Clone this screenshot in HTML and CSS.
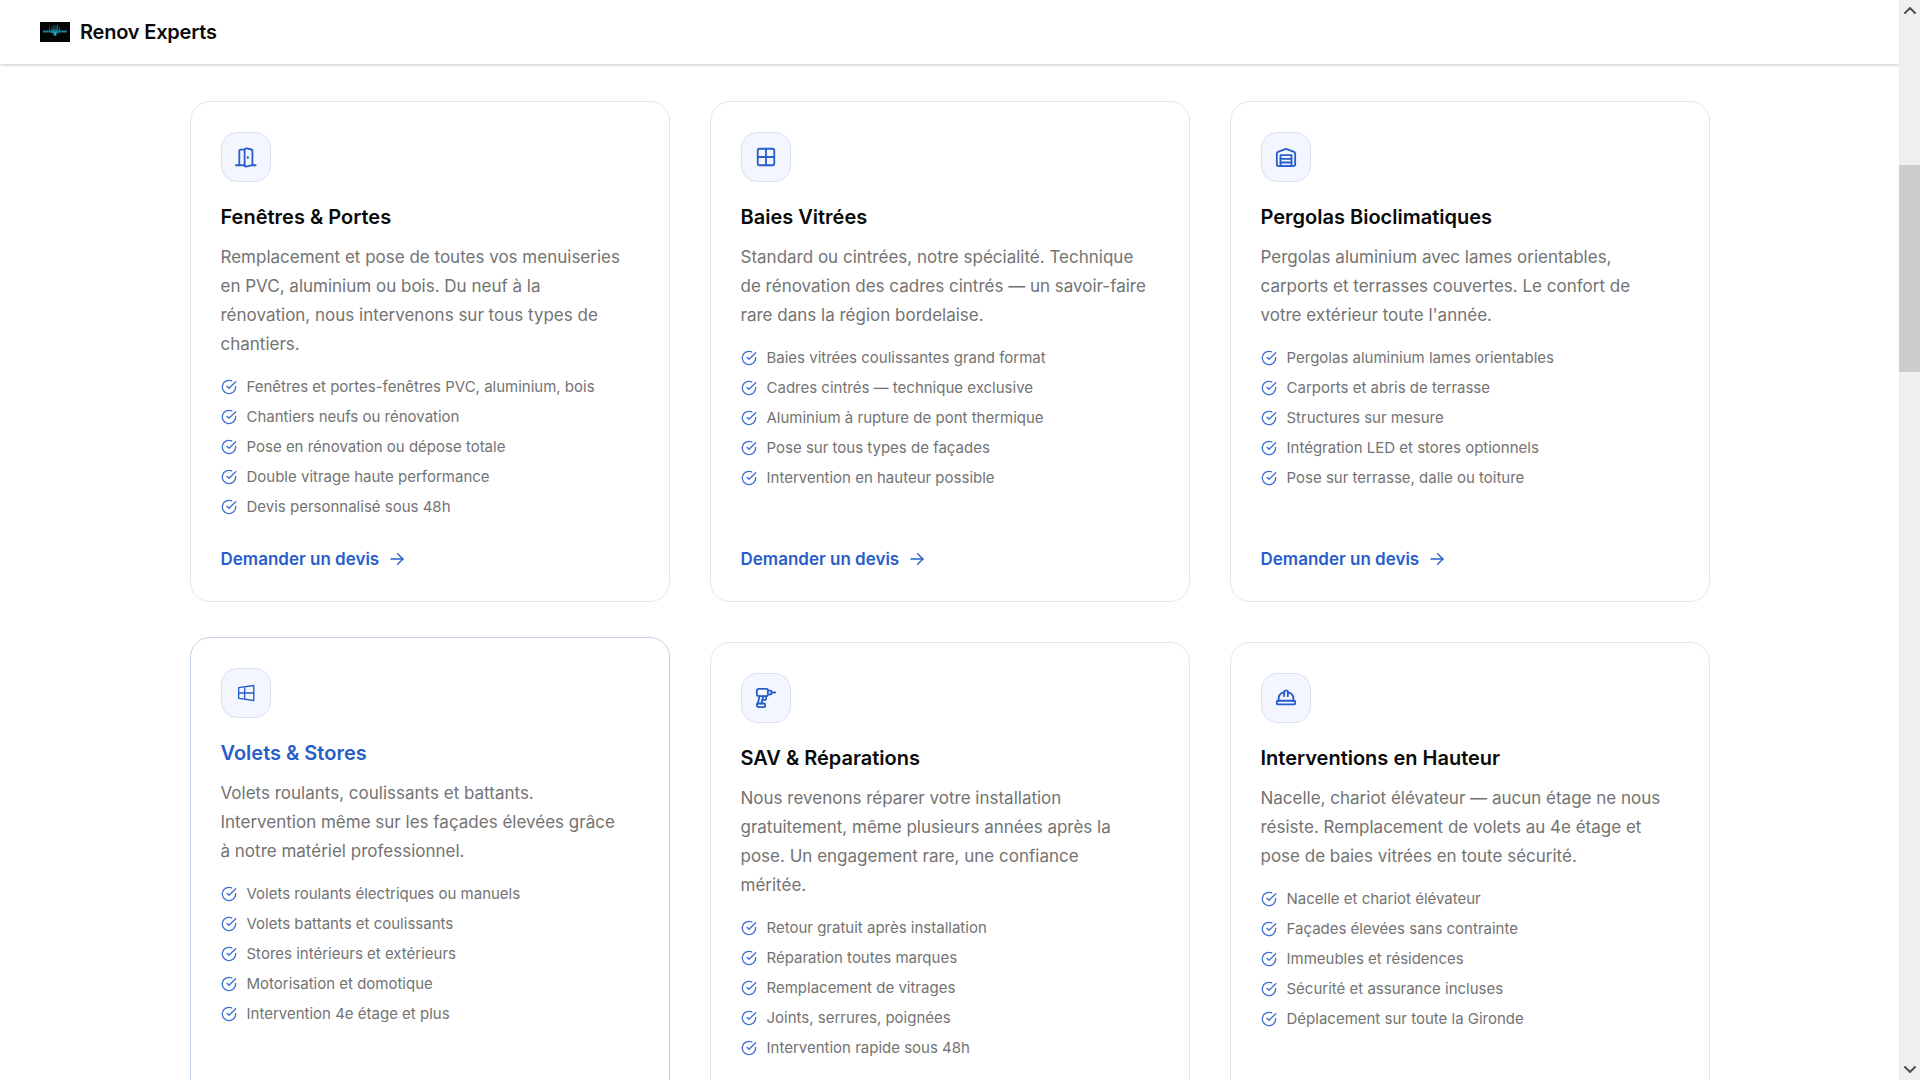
FILE: index.html
```html
<!DOCTYPE html>
<html lang="fr">

<head>
  <meta charset="UTF-8" />
  <meta name="viewport" content="width=device-width, initial-scale=1.0"/>
  <title>Renov Experts</title>
  <link rel="stylesheet" href="styles.css">
</head>
<body>
  <!-- icônes réutilisées dans les cartes -->
  <svg class="sprite" aria-hidden="true">
    <symbol id="check" viewBox="0 0 24 24">
      <path d="M22 11.08V12a10 10 0 1 1-5.93-9.14"/>
      <path d="m9 11 3 3L22 4"/>
    </symbol>
    <symbol id="arrow" viewBox="0 0 24 24">
      <path d="M3 12h18"/>
      <path d="m13 4 8 8-8 8"/>
    </symbol>
  </svg>

  <div class="window">
    <div class="page">
      <header class="navbar">
        <a class="brand" href="#">
          <svg class="logo" viewBox="0 0 30 20" aria-hidden="true">
            <rect width="30" height="20" fill="#020405"/>
            <path d="M3 8.500h8l1-1h6l1 1h8v2h-7l-3 .7-1 2.800h-2l-1-2.800-3-.7H3z" fill="#187f98"/>
            <path d="M9.500 6v2.500M12 5v3.500M14 3v5M16 4v4.500M17.500 3v5.500M19.500 6v2.500" stroke="#176b83" stroke-width="1"/>
            <path d="M14 10.500h2l-1 3z" fill="#42b5d0"/>
          </svg>
          <span>Renov Experts</span>
        </a>
      </header>

      <main class="services">
        <article class="card">
          <div class="card-icon">
            <svg viewBox="0 0 24 24"><path d="M1 21h3.700V5.500a1.500 1.500 0 0 1 1.500-1.500h4"/><path d="M10.500 3.500v17.800c0 .8.6 1.300 1.400 1.100l6-1.200a1.300 1.300 0 0 0 1.100-1.300V5.200A1.500 1.500 0 0 0 17.900 3.800l-5.200-1.200a1.800 1.800 0 0 0-2.200 1.700"/><path d="M4.700 21h5.800M19 21h3.500M14 12v1"/></svg>
          </div>
          <h3>Fenêtres &amp; Portes</h3>
          <p>Remplacement et pose de toutes vos menuiseries en PVC, aluminium ou bois. Du neuf à la rénovation, nous intervenons sur tous types de chantiers.</p>
          <ul>
            <li><svg><use href="#check"/></svg>Fenêtres et portes-fenêtres PVC, aluminium, bois</li>
            <li><svg><use href="#check"/></svg>Chantiers neufs ou rénovation</li>
            <li><svg><use href="#check"/></svg>Pose en rénovation ou dépose totale</li>
            <li><svg><use href="#check"/></svg>Double vitrage haute performance</li>
            <li><svg><use href="#check"/></svg>Devis personnalisé sous 48h</li>
          </ul>
          <a class="card-link" href="#devis">Demander un devis <svg><use href="#arrow"/></svg></a>
        </article>

        <article class="card">
          <div class="card-icon">
            <svg viewBox="0 0 24 24"><rect x="3" y="3" width="18" height="18" rx="2"/><path d="M3 12h18M12 3v18"/></svg>
          </div>
          <h3>Baies Vitrées</h3>
          <p>Standard ou cintrées, notre spécialité. Technique de rénovation des cadres cintrés — un savoir-faire rare dans la région bordelaise.</p>
          <ul>
            <li><svg><use href="#check"/></svg>Baies vitrées coulissantes grand format</li>
            <li><svg><use href="#check"/></svg>Cadres cintrés — technique exclusive</li>
            <li><svg><use href="#check"/></svg>Aluminium à rupture de pont thermique</li>
            <li><svg><use href="#check"/></svg>Pose sur tous types de façades</li>
            <li><svg><use href="#check"/></svg>Intervention en hauteur possible</li>
          </ul>
          <a class="card-link" href="#devis">Demander un devis <svg><use href="#arrow"/></svg></a>
        </article>

        <article class="card">
          <div class="card-icon">
            <svg viewBox="0 0 24 24"><path d="M22 8.350V20a2 2 0 0 1-2 2H4a2 2 0 0 1-2-2V8.350A2 2 0 0 1 3.260 6.500l8-3.200a2 2 0 0 1 1.480 0l8 3.200A2 2 0 0 1 22 8.350Z"/><path d="M6 18h12M6 14h12"/><rect x="6" y="10" width="12" height="12"/></svg>
          </div>
          <h3>Pergolas Bioclimatiques</h3>
          <p>Pergolas aluminium avec lames orientables, carports et terrasses couvertes. Le confort de votre extérieur toute l'année.</p>
          <ul>
            <li><svg><use href="#check"/></svg>Pergolas aluminium lames orientables</li>
            <li><svg><use href="#check"/></svg>Carports et abris de terrasse</li>
            <li><svg><use href="#check"/></svg>Structures sur mesure</li>
            <li><svg><use href="#check"/></svg>Intégration LED et stores optionnels</li>
            <li><svg><use href="#check"/></svg>Pose sur terrasse, dalle ou toiture</li>
          </ul>
          <a class="card-link" href="#devis">Demander un devis <svg><use href="#arrow"/></svg></a>
        </article>

        <article class="card active">
          <div class="card-icon">
            <svg class="thin" viewBox="0 0 24 24"><path d="M4 6.200 20.500 3.800v16.400L4 17.800zM4 12h16.500M10.500 5.300v13.400"/></svg>
          </div>
          <h3>Volets &amp; Stores</h3>
          <p>Volets roulants, coulissants et battants. Intervention même sur les façades élevées grâce à notre matériel professionnel.</p>
          <ul>
            <li><svg><use href="#check"/></svg>Volets roulants électriques ou manuels</li>
            <li><svg><use href="#check"/></svg>Volets battants et coulissants</li>
            <li><svg><use href="#check"/></svg>Stores intérieurs et extérieurs</li>
            <li><svg><use href="#check"/></svg>Motorisation et domotique</li>
            <li><svg><use href="#check"/></svg>Intervention 4e étage et plus</li>
          </ul>
        </article>

        <article class="card">
          <div class="card-icon">
            <svg viewBox="0 0 24 24"><path d="M14 9c0 .6-.4 1-1 1H4c-1.100 0-2-.9-2-2V4c0-1.100.9-2 2-2h9c.6 0 1 .4 1 1Z"/><path d="M18 6h4"/><path d="M14 4h3a1 1 0 0 1 1 1v2a1 1 0 0 1-1 1h-3"/><path d="m5 10-2 8"/><path d="M12 10v3c0 .6-.4 1-1 1H8"/><path d="m7 18 2-8"/><path d="M5 22c-1.700 0-3-1.300-3-3 0-.6.4-1 1-1h7c.6 0 1 .4 1 1v2c0 .6-.4 1-1 1Z"/></svg>
          </div>
          <h3>SAV &amp; Réparations</h3>
          <p>Nous revenons réparer votre installation gratuitement, même plusieurs années après la pose. Un engagement rare, une confiance méritée.</p>
          <ul>
            <li><svg><use href="#check"/></svg>Retour gratuit après installation</li>
            <li><svg><use href="#check"/></svg>Réparation toutes marques</li>
            <li><svg><use href="#check"/></svg>Remplacement de vitrages</li>
            <li><svg><use href="#check"/></svg>Joints, serrures, poignées</li>
            <li><svg><use href="#check"/></svg>Intervention rapide sous 48h</li>
          </ul>
        </article>

        <article class="card">
          <div class="card-icon">
            <svg viewBox="0 0 24 24"><path d="M2 18a1 1 0 0 0 1 1h18a1 1 0 0 0 1-1v-2a1 1 0 0 0-1-1H3a1 1 0 0 0-1 1v2z"/><path d="M10 10V5a1 1 0 0 1 1-1h2a1 1 0 0 1 1 1v5"/><path d="M4 15v-3a6 6 0 0 1 6-6"/><path d="M14 6a6 6 0 0 1 6 6v3"/></svg>
          </div>
          <h3>Interventions en Hauteur</h3>
          <p>Nacelle, chariot élévateur — aucun étage ne nous résiste. Remplacement de volets au 4e étage et pose de baies vitrées en toute sécurité.</p>
          <ul>
            <li><svg><use href="#check"/></svg>Nacelle et chariot élévateur</li>
            <li><svg><use href="#check"/></svg>Façades élevées sans contrainte</li>
            <li><svg><use href="#check"/></svg>Immeubles et résidences</li>
            <li><svg><use href="#check"/></svg>Sécurité et assurance incluses</li>
            <li><svg><use href="#check"/></svg>Déplacement sur toute la Gironde</li>
          </ul>
        </article>
      </main>
    </div>

    <div class="scrollbar" aria-hidden="true">
      <svg viewBox="0 0 12 8"><path d="m1 7 5-5 5 5"/></svg>
      <div class="track"><div class="thumb"></div></div>
      <svg viewBox="0 0 12 8"><path d="m1 1 5 5 5-5"/></svg>
    </div>
  </div>
</body>

</html>
```
FILE: styles.css
```css
* {
  box-sizing: border-box;
}
body {
  margin: 0;
  background: #ffffff;
  font-family: 'Inter', sans-serif;
  color: #0a0a0a;
}
h3, p, ul {
  margin: 0;
  padding: 0;
}
a {
  text-decoration: none;
}
svg {
  flex: none;
  fill: none;
  stroke: currentColor;
  stroke-width: 2;
  stroke-linecap: round;
  stroke-linejoin: round;
}
.sprite {
  display: none;
}
.window {
  display: flex;
  height: 100vh;
  overflow: hidden;
}
.page {
  flex: 1;
  min-width: 0;
}

/* barre du haut */
.navbar {
  display: flex;
  align-items: center;
  height: 64px;
  padding: 0 40px;
  background: #ffffff;
  box-shadow: 0 1px 3px rgba(0, 0, 0, 0.22);
}
.brand {
  display: flex;
  align-items: center;
  gap: 10px;
  font-size: 20px;
  font-weight: 600;
  letter-spacing: -0.01em;
  line-height: 26px;
  color: #0a0a0a;
}
.logo {
  width: 30px;
  height: 20px;
  stroke: none;
}

/* cartes des services */
.services {
  display: grid;
  grid-template-columns: repeat(3, 1fr);
  grid-auto-rows: minmax(501px, auto);
  gap: 40px;
  max-width: 1600px;
  margin: 0 auto;
  padding: 37px 40px;
}
.card {
  display: flex;
  flex-direction: column;
  align-items: flex-start;
  padding: 30px;
  border: 1px solid #e7e7ea;
  border-radius: 20px;
  background: #ffffff;
}
.card-icon {
  display: flex;
  align-items: center;
  justify-content: center;
  width: 50px;
  height: 50px;
  margin-bottom: 20px;
  border: 1px solid #d8e0f3;
  border-radius: 16px;
  background: #f3f6fe;
  color: #285ecb;
}
.card-icon svg {
  width: 22px;
  height: 22px;
}
.card-icon .thin {
  stroke-width: 1.5;
}
.card h3 {
  margin-bottom: 11px;
  font-size: 20px;
  font-weight: 600;
  line-height: 30px;
}
.card p {
  margin-bottom: 17px;
  padding-right: 11px;
  font-size: 17px;
  line-height: 29px;
  color: #737373;
}
.card ul {
  display: flex;
  flex-direction: column;
  gap: 8px;
  list-style: none;
}
.card li {
  display: flex;
  align-items: center;
  gap: 10px;
  font-size: 15px;
  line-height: 22px;
  color: #737373;
}
.card li svg {
  width: 16px;
  height: 16px;
  color: #3f6fd0;
}
.card-link {
  display: flex;
  align-items: center;
  gap: 10px;
  margin-top: auto;
  font-size: 17px;
  font-weight: 600;
  line-height: 24px;
  color: #285ecb;
}
.card-link svg {
  width: 16px;
  height: 16px;
}
.card.active {
  border-color: #c3cfe6;
  transform: translateY(-5px);
}
.card.active h3 {
  color: #285ecb;
}

/* ascenseur */
.scrollbar {
  display: flex;
  flex-direction: column;
  align-items: center;
  width: 21px;
  padding: 6px 0;
  background: #efefef;
  color: #505050;
}
.scrollbar svg {
  width: 12px;
  height: 8px;
}
.track {
  flex: 1;
  width: 100%;
  padding-top: 151px;
}
.thumb {
  height: 23%;
  background: #cdcdcd;
}
```
